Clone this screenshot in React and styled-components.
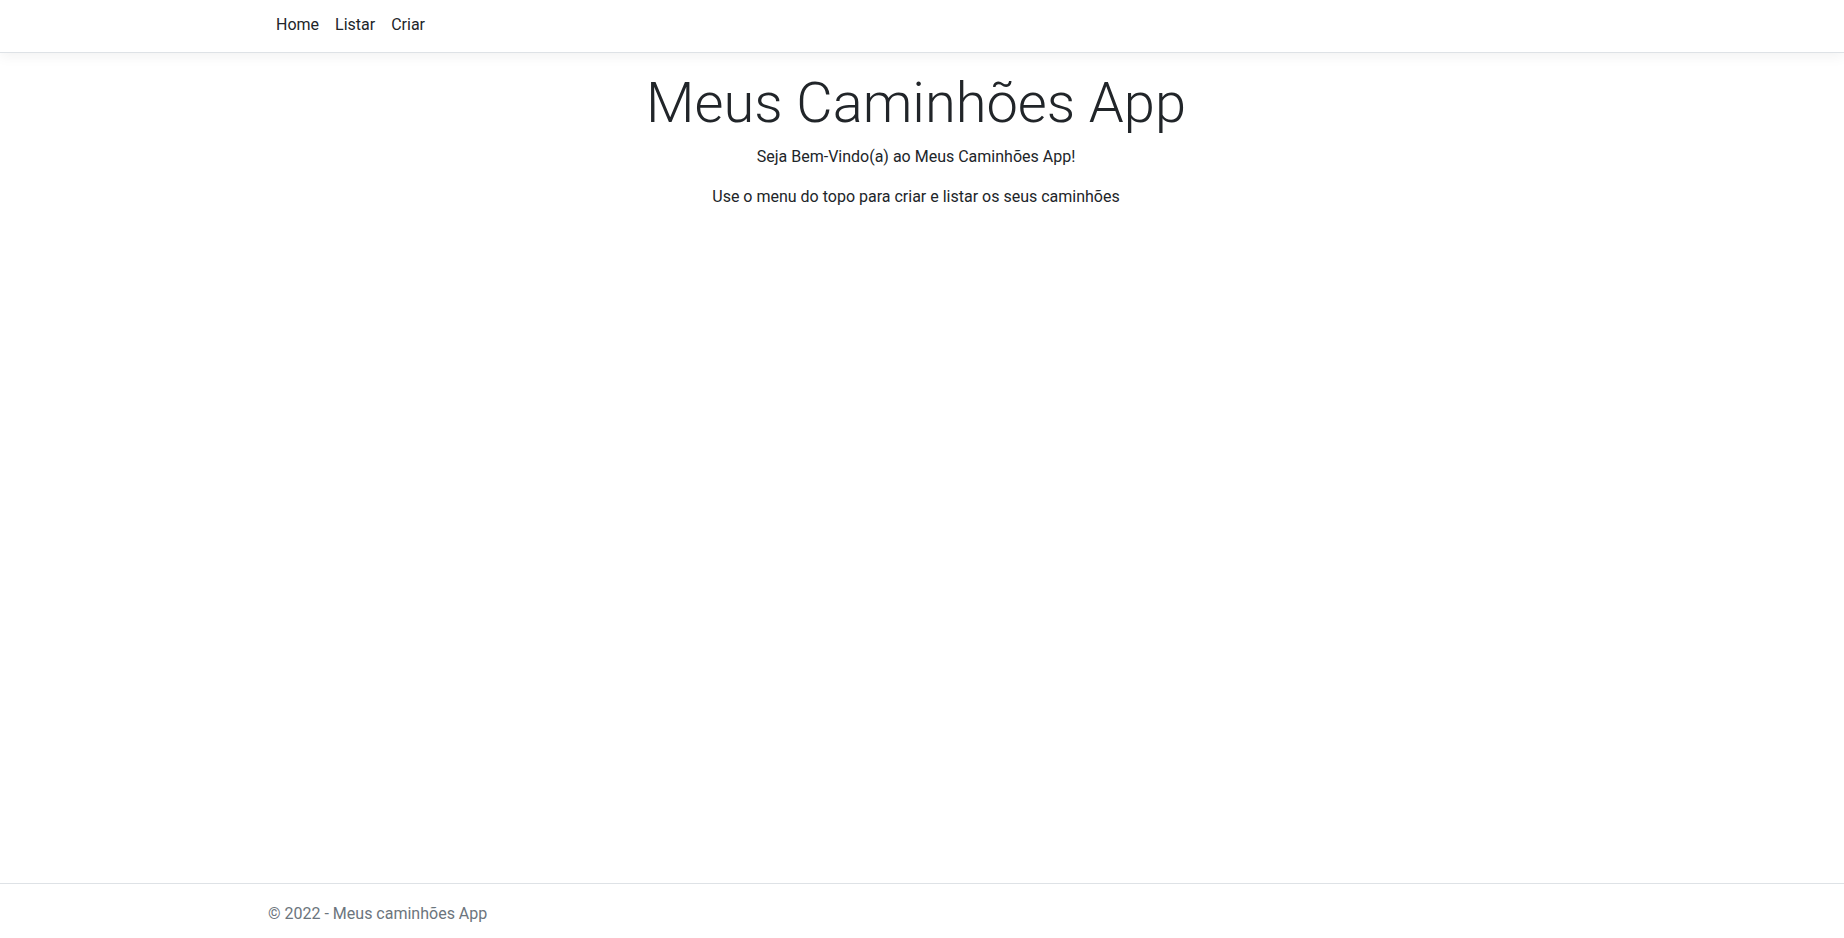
import React from "react";
import styled, { createGlobalStyle } from "styled-components";

const GlobalStyle = createGlobalStyle`
  *, *::before, *::after { box-sizing: border-box; }
  html, body { margin: 0; padding: 0; height: 100%; }
  body {
    font-family: Roboto, "Noto Sans", sans-serif;
    font-size: 16px;
    line-height: 1.5;
    color: #212529;
    background: #fff;
    overflow: hidden;
  }
  #root { height: 100%; }
`;

const Page = styled.div`
  display: flex;
  flex-direction: column;
  min-height: 100vh;
`;

const Container = styled.div`
  width: 1320px;
  max-width: 100%;
  margin: 0 calc(50% - 654px) 0 calc(50% - 666px);
  padding: 0 12px;
`;

const Header = styled.header`
  background: #fff;
  border-bottom: 1px solid #dee2e6;
  box-shadow: 0 4px 12px rgba(0, 0, 0, 0.05);
`;

const NavBar = styled.nav`
  height: 52px;
  display: flex;
  align-items: flex-start;
  padding-top: 13px;
`;

const NavList = styled.ul`
  display: flex;
  list-style: none;
  margin: 0;
  padding: 0;
`;

const NavLink = styled.a`
  display: block;
  padding: 0 8px;
  color: #212529;
  text-decoration: none;
  line-height: 24px;
`;

const Main = styled.main`
  flex: 1;
  padding-top: 17px;
  text-align: center;
`;

const Title = styled.h1`
  font-size: 56px;
  font-weight: 300;
  line-height: 1.2;
  margin: 0 0 8px;
`;

const Text = styled.p`
  margin: 0 0 16px;
`;

const Footer = styled.footer`
  border-top: 1px solid #dee2e6;
  color: #6c757d;
  height: 55px;
  padding-top: 18px;
  line-height: 24px;
  white-space: nowrap;
`;

export default function App() {
  return (
    <>
      <GlobalStyle />
      <Page>
        <Header>
          <Container>
            <NavBar>
              <NavList>
                <li><NavLink href="#">Home</NavLink></li>
                <li><NavLink href="#">Listar</NavLink></li>
                <li><NavLink href="#">Criar</NavLink></li>
              </NavList>
            </NavBar>
          </Container>
        </Header>
        <Main>
          <Container>
            <Title>Meus Caminhões App</Title>
            <Text>Seja Bem-Vindo(a) ao Meus Caminhões App!</Text>
            <Text>Use o menu do topo para criar e listar os seus caminhões</Text>
          </Container>
        </Main>
        <Footer>
          <Container>© 2022 - Meus caminhões App</Container>
        </Footer>
      </Page>
    </>
  );
}
